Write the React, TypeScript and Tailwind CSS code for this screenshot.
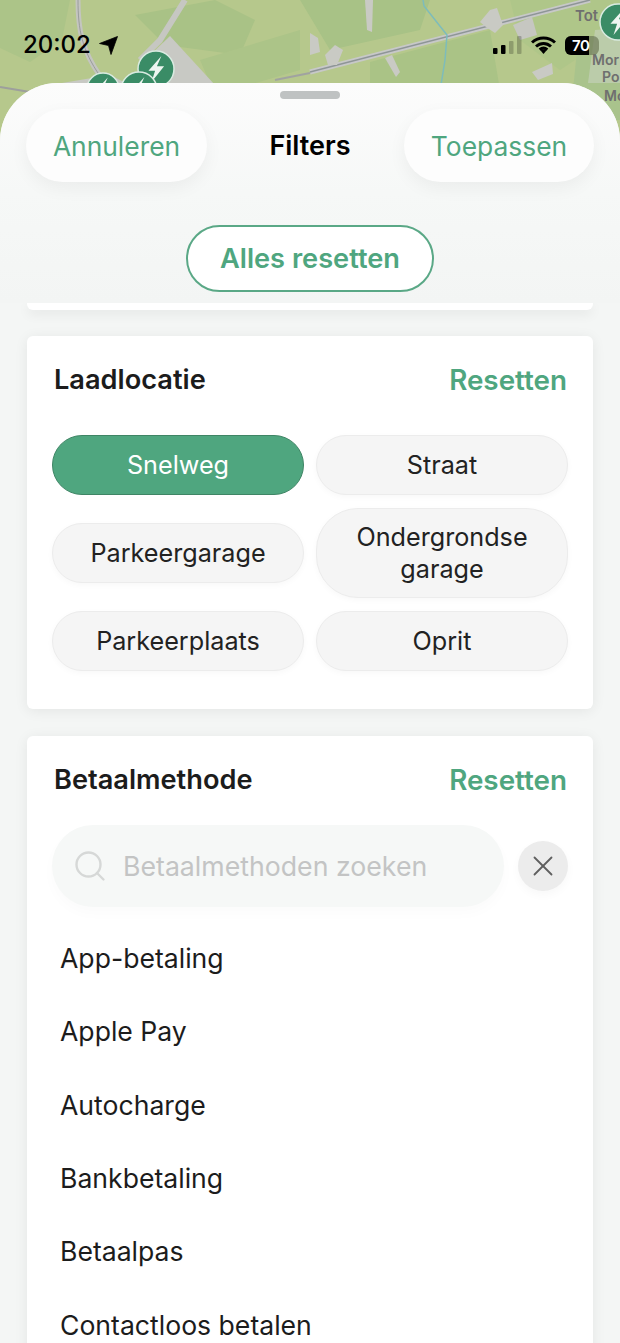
import React from 'react';
import { Search, X } from 'lucide-react';

const locations = ['Snelweg', 'Straat', 'Parkeergarage', 'Ondergrondse garage', 'Parkeerplaats', 'Oprit'];
const payments = ['App-betaling', 'Apple Pay', 'Autocharge', 'Bankbetaling', 'Betaalpas', 'Contactloos betalen'];

const Pin = ({ x, y, r }: { x: number; y: number; r: number }) => (
  <g>
    <circle cx={x} cy={y} r={r} fill="#3a8c66" stroke="#d9ebe1" strokeWidth="1.5" />
    <path
      d={`M${x + r * 0.3} ${y - r * 0.72}L${x - r * 0.42} ${y + r * 0.1}H${x - r * 0.05}L${x - r * 0.25} ${y + r * 0.72}L${x + r * 0.45} ${y - r * 0.15}H${x + r * 0.05}Z`}
      fill="#eef6f1"
    />
  </g>
);

const MapBackground = () => (
  <svg className="absolute left-0 top-0" width="620" height="150" viewBox="0 0 620 150">
    <rect width="620" height="150" fill="#b6c88c" />
    <path d="M0 0H70L62 40L30 62L0 48Z" fill="#acc488" />
    <path d="M135 15L215 0L255 20L240 55L165 45Z" fill="#a9c286" />
    <path d="M200 60L300 30L300 70L215 95Z" fill="#acc488" />
    <path d="M370 62L490 30L500 90H370Z" fill="#aac386" />
    <path d="M300 0H430L420 30L330 50Z" fill="#a8c286" />
    <path d="M510 0H620V30L560 70L520 40Z" fill="#afc689" />
    <path d="M578 40L620 30V120H570Z" fill="#a9c38c" />
    <path d="M0 87L30 92" stroke="#9d9f9c" strokeWidth="2" fill="none" />
    <path d="M78 0C78 30 82 50 100 76" stroke="#c4c5c0" strokeWidth="5" fill="none" />
    <path d="M78 0C78 30 82 50 100 76" stroke="#9a9d9c" strokeWidth="1" fill="none" />
    <path d="M185 0L160 40L140 60" stroke="#c6c7c2" strokeWidth="6" fill="none" />
    <path d="M170 36L215 85H170L145 60Z" fill="#c8c9c4" />
    <path d="M50 85L110 75L130 85Z" fill="#c8c9c4" />
    <path d="M310 72L590 0" stroke="#c7c8c8" strokeWidth="5" fill="none" />
    <path d="M310 72L590 0" stroke="#8e9597" strokeWidth="1.5" fill="none" />
    <path d="M275 80L310 73" stroke="#a0a3a0" strokeWidth="2" fill="none" />
    <path d="M423 0L424 6L447 35L445 60L441 85" stroke="#7dbcbb" strokeWidth="1.5" fill="none" />
    <path d="M365 0H373L372 32L367 30Z" fill="#c9cac4" />
    <path d="M325 55L335 45L343 50L337 65L328 65Z" fill="#c9cac4" />
    <path d="M310 33L318 38L320 52L310 55Z" fill="#c9cac4" />
    <path d="M385 58L392 55L400 72L396 77Z" fill="#c9cac4" />
    <path d="M480 22L490 10L497 8L503 25L495 33L486 27Z" fill="#c9cac4" />
    <path d="M513 25L532 17L537 35L520 40Z" fill="#c6c7c1" />
    <path d="M532 72L552 63L553 74L538 80Z" fill="#c9cac4" />
    <path d="M595 30L620 28V83H588Z" fill="#c8d2be" opacity="0.6" />
    <Pin x={156} y={69} r={18} />
    <Pin x={103} y={89} r={16} />
    <Pin x={139} y={90} r={18} />
    <text x="575" y="21" fontSize="15" fontWeight="600" fill="#6f6f6f" fontFamily="Inter, sans-serif">Tot</text>
    <text x="592" y="65" fontSize="14" fontWeight="600" fill="#6f6f6f" fontFamily="Inter, sans-serif">Mor</text>
    <text x="602" y="82" fontSize="14" fontWeight="600" fill="#6f6f6f" fontFamily="Inter, sans-serif">Po</text>
    <text x="604" y="101" fontSize="14" fontWeight="600" fill="#6f6f6f" fontFamily="Inter, sans-serif">Mo</text>
    <Pin x={618} y={22} r={18} />
  </svg>
);

const StatusBar = () => (
  <div className="absolute left-0 right-0 top-[30px] z-10 flex h-[30px] items-center justify-between pl-[23px] pr-[21px]">
    <div className="flex items-center gap-[8px] text-[24px] font-medium text-black">
      <span>20:02</span>
      <svg width="19" height="19" viewBox="0 0 19 19">
        <path d="M18.5 0.5L0.5 7.5L9.5 9.5L12 18.5Z" fill="#000" stroke="#000" strokeWidth="0.8" strokeLinejoin="round" />
      </svg>
    </div>
    <div className="flex items-center gap-[9px]">
      <svg width="29" height="18" viewBox="0 0 29 18">
        <rect x="0" y="12" width="4.5" height="6" rx="1" fill="#000" />
        <rect x="8" y="9" width="4.5" height="9" rx="1" fill="#000" />
        <rect x="16" y="5" width="4.5" height="13" rx="1" fill="#000" opacity="0.22" />
        <rect x="24" y="0" width="4.5" height="18" rx="1" fill="#000" opacity="0.22" />
      </svg>
      <svg width="25" height="18" viewBox="0 0 25 18">
        <path d="M1 6.5C7.5 0.5 17.5 0.5 24 6.5M5 10.5C9.5 6.5 15.5 6.5 20 10.5M8.6 13.6C11 11.8 14 11.8 16.4 13.6" stroke="#000" strokeWidth="3" fill="none" />
        <path d="M12.5 18L9.5 14.5C11.2 13.2 13.8 13.2 15.5 14.5Z" fill="#000" />
      </svg>
      <div className="relative flex h-[19px] w-[34px] items-center overflow-hidden rounded-[6px] bg-[#6f7a58]/70">
        <div className="absolute bottom-0 left-0 top-0 w-[24px] bg-black" />
        <span className="relative pl-[7px] text-[15px] font-semibold leading-none tracking-tight text-white">70</span>
      </div>
    </div>
  </div>
);

const Card = ({ title, children }: { title: string; children: React.ReactNode }) => (
  <section className="mx-[27px] mb-[27px] rounded-[6px] bg-white px-[27px] pb-[38px] pt-[26px] shadow-[0_2px_14px_rgba(0,0,0,0.07)]">
    <div className="flex items-center justify-between">
      <h2 className="text-[27.2px] font-semibold leading-[36px] text-[#1c1c1c]">{title}</h2>
      <button className="-mr-[1px] text-[27.8px] font-semibold leading-[36px] text-[#4fa67f]">Resetten</button>
    </div>
    {children}
  </section>
);

export default function App() {
  return (
    <div className="relative h-[1343px] w-[620px] overflow-hidden bg-[#f4f6f5] font-['Inter',sans-serif]">
      <MapBackground />
      <StatusBar />

      <div className="absolute inset-x-0 bottom-0 top-[83px] rounded-t-[58px] bg-[#f4f6f5]">
        <div className="relative h-[220px] rounded-t-[58px] bg-gradient-to-b from-[#fcfcfc] via-[#f6f8f7] via-50% to-[#f3f5f4]">
          <div className="absolute left-[280px] top-[8px] h-[8px] w-[60px] rounded-full bg-[#bfc2c2]" />
          <div className="flex items-center justify-between px-[26px] pt-[26px]">
            <button className="flex h-[73px] w-[181px] items-center justify-center rounded-full bg-[#fdfdfd] pt-[2px] text-[26.4px] text-[#4fa67f] shadow-[0_6px_18px_rgba(0,0,0,0.05)]">
              Annuleren
            </button>
            <h1 className="ml-[9px] pt-[2px] text-[27px] font-semibold text-black">Filters</h1>
            <button className="flex h-[73px] w-[190px] items-center justify-center rounded-full bg-[#fdfdfd] pt-[2px] text-[26.4px] text-[#4fa67f] shadow-[0_6px_18px_rgba(0,0,0,0.05)]">
              Toepassen
            </button>
          </div>
          <div className="mt-[43px] flex justify-center">
            <button className="flex h-[67px] w-[248px] items-center justify-center rounded-full border-2 border-[#5aa886] bg-white pt-[1px] text-[27.2px] font-semibold text-[#4fa67f]">
              Alles resetten
            </button>
          </div>
        </div>

        <div className="mx-[27px] h-[7px] rounded-b-[6px] bg-white shadow-[0_4px_12px_rgba(0,0,0,0.08)]" />
        <div className="h-[26px]" />

        <Card title="Laadlocatie">
          <div className="-mx-[2px] mt-[37px] grid grid-cols-2 items-center gap-x-[12px] gap-y-[13px]">
            {locations.map(label => (
              <button
                key={label}
                className={
                  label === 'Snelweg'
                    ? 'flex h-[60px] items-center justify-center rounded-[30px] border border-[#3f8565] bg-[#4fa67f] pt-[2px] text-[25.2px] text-white'
                    : label === 'Ondergrondse garage'
                      ? 'flex h-[90px] items-center justify-center rounded-[42px] border border-[#ececec] bg-[#f5f5f5] px-[30px] text-center text-[25.2px] leading-[32px] text-[#222222] shadow-[0_2px_6px_rgba(0,0,0,0.03)]'
                      : 'flex h-[60px] items-center justify-center rounded-[30px] border border-[#ececec] bg-[#f5f5f5] pt-[2px] text-[25.2px] text-[#222222] shadow-[0_2px_6px_rgba(0,0,0,0.03)]'
                }
              >
                {label}
              </button>
            ))}
          </div>
        </Card>

        <Card title="Betaalmethode">
          <div className="-mx-[2px] mt-[27px] flex items-center gap-[14px]">
            <div className="flex h-[82px] w-[452px] items-center rounded-full bg-[#f6f8f7] pl-[20px] shadow-[0_6px_14px_rgba(0,0,0,0.02)]">
              <Search size={36} strokeWidth={1.6} className="text-[#d6d8d7]" />
              <span className="ml-[15px] text-[26.7px] text-[#c3c4c4]">Betaalmethoden zoeken</span>
            </div>
            <button className="flex h-[50px] w-[50px] items-center justify-center rounded-full bg-[#ececec] shadow-[0_4px_10px_rgba(0,0,0,0.03)]">
              <X size={34} strokeWidth={1.3} className="text-[#5f5f5f]" />
            </button>
          </div>
          <ul className="mt-[15px]">
            {payments.map(name => (
              <li key={name} className="flex h-[73.4px] items-center pl-[6px] text-[26.6px] text-[#1c1c1c]">
                {name}
              </li>
            ))}
          </ul>
        </Card>
      </div>
    </div>
  );
}
